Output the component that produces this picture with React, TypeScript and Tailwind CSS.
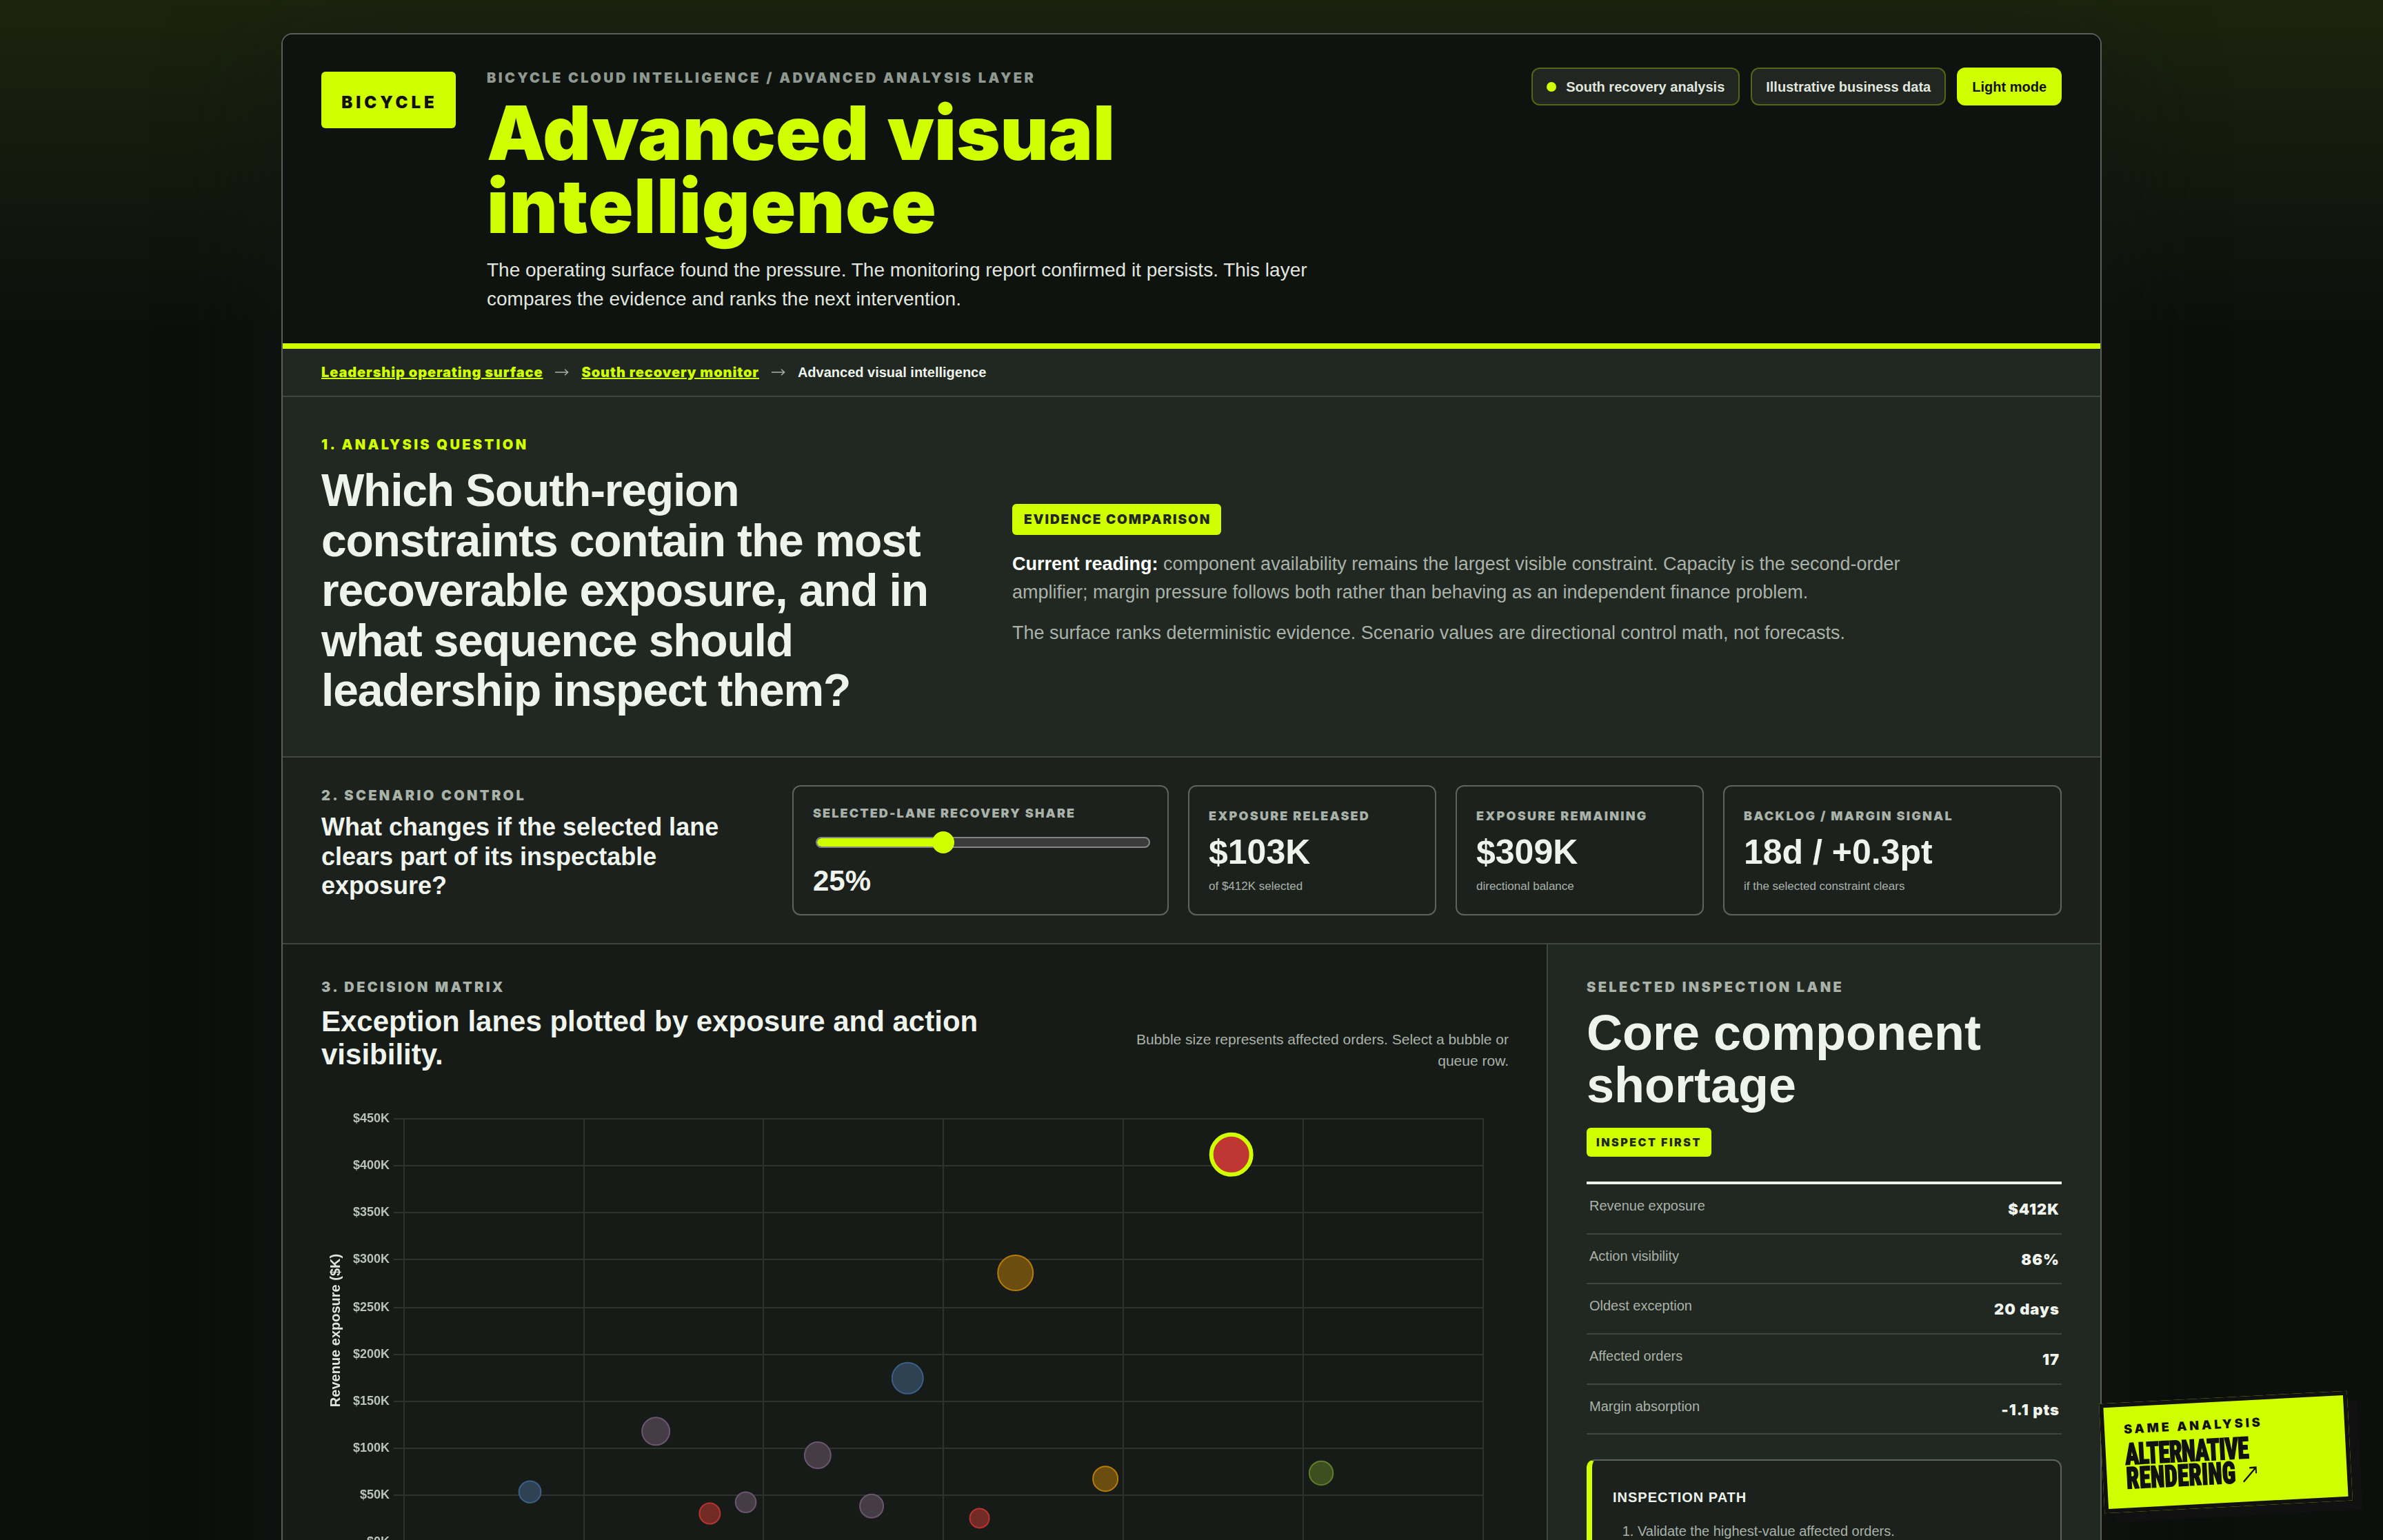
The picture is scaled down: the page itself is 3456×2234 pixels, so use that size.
import React, { useState } from 'react';

type Lane = { visibility: number; exposure: number; r: number; fill: string; stroke: string; selected?: boolean };

const lanes: Lane[] = [
  { visibility: 86, exposure: 412, r: 29, fill: '#bf3632', stroke: '#d0ff00', selected: true },
  { visibility: 74, exposure: 286, r: 25.5, fill: '#6b4d0f', stroke: '#b67d08' },
  { visibility: 68, exposure: 174, r: 22.5, fill: '#2f4254', stroke: '#3c5f86' },
  { visibility: 54, exposure: 117.5, r: 20, fill: '#453c46', stroke: '#6a5672' },
  { visibility: 63, exposure: 92, r: 19, fill: '#453c46', stroke: '#6a5672' },
  { visibility: 91, exposure: 73, r: 17.2, fill: '#3e4f1f', stroke: '#5f7d28' },
  { visibility: 79, exposure: 67, r: 18, fill: '#6b4d0f', stroke: '#b67d08' },
  { visibility: 47, exposure: 53, r: 15.8, fill: '#2f4254', stroke: '#3c5f86' },
  { visibility: 59, exposure: 42, r: 14.8, fill: '#453c46', stroke: '#6a5672' },
  { visibility: 66, exposure: 38, r: 17, fill: '#453c46', stroke: '#6a5672' },
  { visibility: 57, exposure: 30, r: 15, fill: '#722a26', stroke: '#b83430' },
  { visibility: 72, exposure: 25, r: 14, fill: '#722a26', stroke: '#b83430' },
];

const yTicks = [
  { label: '$450K', y: 40 },
  { label: '$400K', y: 108 },
  { label: '$350K', y: 176 },
  { label: '$300K', y: 244 },
  { label: '$250K', y: 314 },
  { label: '$200K', y: 382 },
  { label: '$150K', y: 450 },
  { label: '$100K', y: 518 },
  { label: '$50K', y: 586 },
  { label: '$0K', y: 654 },
];

const xTicks = [120, 381, 641, 902, 1163, 1424, 1685];

const facts = [
  ['Revenue exposure', '$412K'],
  ['Action visibility', '86%'],
  ['Oldest exception', '20 days'],
  ['Affected orders', '17'],
  ['Margin absorption', '-1.1 pts'],
];

const results = [
  { label: 'EXPOSURE RELEASED', value: '$103K', note: 'of $412K selected' },
  { label: 'EXPOSURE REMAINING', value: '$309K', note: 'directional balance' },
  { label: 'BACKLOG / MARGIN SIGNAL', value: '18d / +0.3pt', note: 'if the selected constraint clears' },
];

const Eyebrow = ({ children, className = 'text-[#a9b2a9]' }: { children: React.ReactNode; className?: string }) => (
  <p className={`font-['Inter',sans-serif] font-black text-[20px] leading-[30px] tracking-[3.35px] ${className}`}>{children}</p>
);

const CrumbArrow = () => (
  <svg className="h-[12px] w-[20px]" viewBox="0 0 20 12" fill="none" stroke="#a9b2a9" strokeWidth="1.5">
    <path d="M0 6h18.5M14 1.8 18.6 6 14 10.2" />
  </svg>
);

const DecisionMatrix = () => {
  const px = (v: number) => 120 + (v - 40) * 26.08;
  const py = (k: number) => 653.5 - k * 1.3633;

  return (
    <svg className="mt-[28px] block w-[1722px] h-[700px]" viewBox="0 0 1722 700">
      <g stroke="#2f332f" strokeWidth="2">
        {yTicks.map((t) => (
          <line key={t.label} x1="105" x2="1686" y1={t.y} y2={t.y} />
        ))}
        {xTicks.map((x) => (
          <line key={x} x1={x} x2={x} y1="39" y2="654" />
        ))}
      </g>
      <g className="font-['Liberation_Sans',sans-serif] font-bold text-[18px] blur-[0.6px]" fill="#b9c1b9" textAnchor="end">
        {yTicks.map((t) => (
          <text key={t.label} x="99" y={t.y + 5}>{t.label}</text>
        ))}
      </g>
      <text
        className="font-['Liberation_Sans',sans-serif] font-bold text-[20px] blur-[0.6px]"
        fill="#dfe5dd"
        textAnchor="middle"
        transform="translate(27 347) rotate(-90)"
      >
        Revenue exposure ($K)
      </text>
      {lanes.map((l) => (
        <circle
          key={l.visibility}
          cx={px(l.visibility)}
          cy={py(l.exposure)}
          r={l.r}
          fill={l.fill}
          stroke={l.stroke}
          strokeWidth={l.selected ? 6 : 2}
        />
      ))}
    </svg>
  );
};

const App = () => {
  const [share] = useState(25);

  return (
    <div className="relative w-[3456px] h-[2234px] overflow-hidden pt-[48px] bg-[#0b100c] bg-[linear-gradient(180deg,#1c240e_0px,#0b100c_480px)] font-['Liberation_Sans',Arial,sans-serif] text-[#eef3ec]">
      <main className="mx-auto w-[2640px] h-[2400px] rounded-[16px] border-2 border-[#585f59] overflow-hidden bg-[#171b17] shadow-[0_48px_160px_rgba(20,21,20,0.75)]">
        <header className="flex h-[456px] border-b-8 border-[#d0ff00] bg-[#0f1310] pt-[48px] px-[56px]">
          <div className="mt-[6px] flex h-[82px] w-[195px] shrink-0 items-center justify-center rounded-[6px] bg-[#d0ff00] pl-[3px] pt-[7px] font-['Inter',sans-serif] text-[24px] font-black tracking-[5px] text-[#111]">
            BICYCLE
          </div>
          <div className="ml-[45px] w-[1230px]">
            <Eyebrow className="text-[#8f998f]">BICYCLE CLOUD INTELLIGENCE / ADVANCED ANALYSIS LAYER</Eyebrow>
            <h1 className="mt-[12px] w-[1000px] font-['Inter',sans-serif] text-[108px] font-black leading-[106px] text-[#d0ff00] [word-spacing:5px]">
              Advanced visual <span className="tracking-[0.9px]">intelligence</span>
            </h1>
            <p className="mt-[19px] text-[28px] leading-[42px] text-[#e0e6de]">
              The operating surface found the pressure. The monitoring report confirmed it persists. This layer compares the
              evidence and ranks the next intervention.
            </p>
          </div>
          <div className="ml-auto flex h-[55px] gap-[16px] text-[20px] font-bold">
            <span className="flex items-center gap-[14px] rounded-[12px] border-2 border-[#546613] bg-[#212622] px-[20px] text-[#e0e6de]">
              <i className="size-[14px] rounded-full bg-[#d0ff00]" />
              South recovery analysis
            </span>
            <span className="flex items-center rounded-[12px] border-2 border-[#546613] bg-[#212622] px-[20px] text-[#e0e6de]">
              Illustrative business data
            </span>
            <button className="rounded-[12px] bg-[#d0ff00] px-[22px] text-[#111]">Light mode</button>
          </div>
        </header>

        <nav className="flex h-[70px] items-center gap-[18px] border-b-2 border-[#3f4540] bg-[#212721] px-[56px] text-[20px] font-bold">
          <a className="font-['Inter',sans-serif] font-black tracking-[0.9px] text-[#d0ff00] underline">Leadership operating surface</a>
          <CrumbArrow />
          <a className="font-['Inter',sans-serif] font-black tracking-[0.9px] text-[#d0ff00] underline">South recovery monitor</a>
          <CrumbArrow />
          <span>Advanced visual intelligence</span>
        </nav>

        <section className="flex h-[523px] items-center border-b-2 border-[#3f4540] bg-[#212721] px-[56px]">
          <div className="w-[1002px] pb-[5px]">
            <Eyebrow className="text-[#d0ff00]">1. ANALYSIS QUESTION</Eyebrow>
            <h2 className="mt-[15px] w-[940px] text-[66px] font-bold leading-[72.6px] tracking-[-1.2px]">
              Which South-region constraints contain the most recoverable exposure, and in what sequence should leadership
              inspect them?
            </h2>
          </div>
          <div className="w-[1320px] pb-[4px] text-[27px] leading-[41px] text-[#a9b2a9]">
            <span className="inline-flex h-[45px] items-center rounded-[6px] bg-[#d0ff00] pl-[17px] pr-[15px] align-top font-['Inter',sans-serif] text-[19px] font-black tracking-[1.9px] text-[#212721]">
              EVIDENCE COMPARISON
            </span>
            <p className="mt-[22px]">
              <strong className="text-white">Current reading:</strong> component availability remains the largest visible
              constraint. Capacity is the second-order amplifier; margin pressure follows both rather than behaving as an
              independent finance problem.
            </p>
            <p className="mt-[18px]">
              The surface ranks deterministic evidence. Scenario values are directional control math, not forecasts.
            </p>
          </div>
        </section>

        <section className="grid h-[271px] grid-cols-[655px_546px_360px_360px_491px] gap-[28px] border-b-2 border-[#3f4540] bg-[#1c211e] px-[56px] py-[40px]">
          <div>
            <Eyebrow>2. SCENARIO CONTROL</Eyebrow>
            <h3 className="mt-[10px] w-[620px] text-[36px] font-bold leading-[42.5px]">
              What changes if the selected lane clears part of its inspectable exposure?
            </h3>
          </div>
          <div className="rounded-[12px] border-2 border-[#5d635e] px-[28px] pt-[26px]">
            <p className="font-['Inter',sans-serif] text-[18px] font-black leading-[26px] tracking-[2.1px] text-[#a9b2a9]">
              SELECTED-LANE RECOVERY SHARE
            </p>
            <div className="relative ml-[4px] -mr-[3px] mt-[13px] flex h-[32px] items-center">
              <div className="h-[16px] w-full overflow-hidden rounded-full border-2 border-[#858585] bg-[#3b3b3b]">
                <div className="h-full w-[186px] rounded-l-full bg-[#d0ff00]" />
              </div>
              <div className="absolute left-[169px] size-[32px] rounded-full bg-[#d0ff00]" />
            </div>
            <p className="mt-[16px] text-[42px] font-bold leading-[48px]">{share}%</p>
          </div>
          {results.map((r) => (
            <div key={r.label} className="rounded-[12px] border-2 border-[#5d635e] px-[28px] pt-[30px]">
              <p className="whitespace-nowrap font-['Inter',sans-serif] text-[18px] font-black leading-[26px] tracking-[2.2px] text-[#a9b2a9]">
                {r.label}
              </p>
              <p className="mt-[10px] text-[50px] font-bold leading-[58px]">{r.value}</p>
              <p className="mt-[9px] text-[17px] leading-[24px] text-[#a9b2a9]">{r.note}</p>
            </div>
          ))}
        </section>

        <div className="flex h-[1100px]">
          <section className="w-[1833px] pl-[56px] pr-[55px] pt-[47px]">
            <div className="flex items-end justify-between">
              <div>
                <Eyebrow>3. DECISION MATRIX</Eyebrow>
                <h3 className="mt-[11px] w-[1000px] text-[42px] font-bold leading-[48.3px]">
                  Exception lanes plotted by exposure and action visibility.
                </h3>
              </div>
              <p className="w-[560px] text-right text-[21px] leading-[31.5px] text-[#a9b2a9]">
                Bubble size represents affected orders. Select a bubble or queue row.
              </p>
            </div>
            <DecisionMatrix />
          </section>

          <aside className="flex-1 border-l-2 border-[#3f4540] bg-[#212721] px-[56px] pt-[47px]">
            <Eyebrow>SELECTED INSPECTION LANE</Eyebrow>
            <h2 className="mt-[14px] text-[72px] font-bold leading-[75.6px]">Core component shortage</h2>
            <span className="mt-[24px] flex h-[42px] w-[181px] items-center rounded-[6px] bg-[#d0ff00] pl-[14px] font-['Inter',sans-serif] text-[16px] font-black tracking-[2.5px] text-[#212721]">
              INSPECT FIRST
            </span>
            <dl className="mt-[36px] border-t-4 border-[#eef3ec]">
              {facts.map(([name, value]) => (
                <div key={name} className="flex h-[72.6px] justify-between border-b-2 border-[#3f4540] px-[4px] leading-[30px]">
                  <dt className="pt-[16px] text-[20px] text-[#a9b2a9]">{name}</dt>
                  <dd className="pt-[21px] -mr-[1px] font-['Inter',sans-serif] text-[22px] font-black tracking-[1px]">{value}</dd>
                </div>
              ))}
            </dl>
            <div className="mt-[36px] h-[400px] rounded-[12px] border-2 border-l-8 border-[#5d635e] border-l-[#d0ff00] bg-[#1c211e] pl-[30px] pt-[38px] text-[20px] leading-[30px]">
              <h4 className="font-bold tracking-[1px]">INSPECTION PATH</h4>
              <ol className="mt-[19px] list-decimal pl-[36px] text-[#a9b2a9]">
                <li>Validate the highest-value affected orders.</li>
              </ol>
            </div>
          </aside>
        </div>
      </main>

      <a className="absolute bottom-[48px] right-[48px] h-[159px] w-[360px] -rotate-3 border-6 border-[#111] bg-[#d0ff00] pl-[28px] pt-[20px] text-[#111] shadow-[14px_14px_0_#111]">
        <span className="block font-['Inter',sans-serif] text-[18px] font-black leading-[26px] tracking-[3.9px]">SAME ANALYSIS</span>
        <span className="mt-[7px] block w-[300px] origin-left scale-x-[0.76] font-['Roboto',sans-serif] text-[43.5px] font-black leading-[34.6px] tracking-[-1px] [font-stretch:75%] [-webkit-text-stroke:1.6px_#111]">
          ALTERNATIVE
          <br />
          <span className="tracking-[0.2px]">RENDERING</span>
          <svg className="ml-[13px] inline-block h-[23px] w-[28px] align-baseline" viewBox="0 0 27 24" preserveAspectRatio="none" fill="none" stroke="#111" strokeWidth="2.6">
            <path d="M1 23 24 3M13 2h12v9" />
          </svg>
        </span>
      </a>
    </div>
  );
};

export default App;
